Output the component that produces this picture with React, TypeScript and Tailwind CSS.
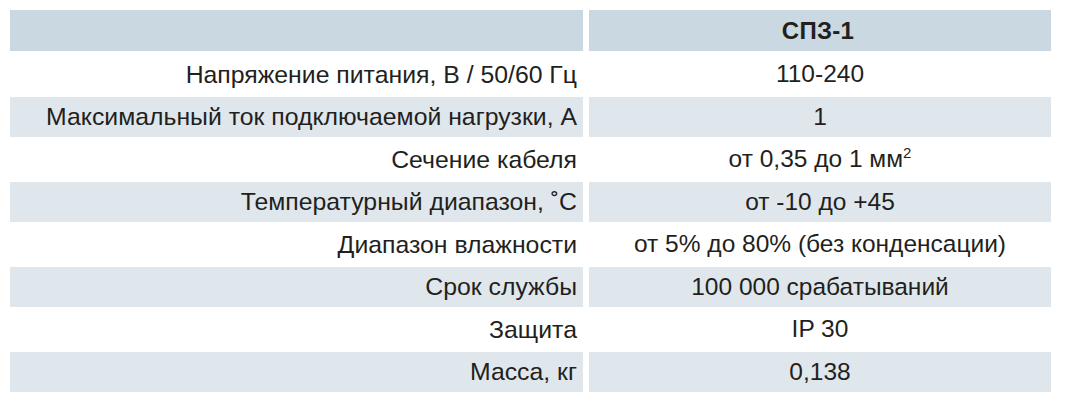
const rows: [string, React.ReactNode][] = [
  ['Напряжение питания, В / 50/60 Гц', '110-240'],
  ['Максимальный ток подключаемой нагрузки, А', '1'],
  [
    'Сечение кабеля',
    <>
      от 0,35 до 1 мм<sup className="text-[15px] relative -top-[9px]">2</sup>
    </>,
  ],
  ['Температурный диапазон, ˚С', 'от -10 до +45'],
  ['Диапазон влажности', 'от 5% до 80% (без конденсации)'],
  ['Срок службы', '100 000 срабатываний'],
  ['Защита', 'IP 30'],
  ['Масса, кг', '0,138'],
];

export default function App() {
  return (
    <div
      className="w-[1068px] h-[413px] bg-white text-[#231f20] pt-[10px] pl-[10px]"
      style={{ fontFamily: '"Liberation Sans", Arial, sans-serif' }}
    >
      <div className="grid grid-cols-[573px_462px] gap-x-[6px] h-[41px] mb-[3.5px]">
        <div className="bg-[#c9d8e1]" />
        <div className="bg-[#c9d8e1] flex items-center justify-center text-[24px] font-bold tracking-[0.3px] pr-[4px]">
          СПЗ-1
        </div>
      </div>
      <div className="flex flex-col gap-y-[2.5px]">
        {rows.map(([label, value], i) => (
          <div
            key={i}
            className="grid grid-cols-[573px_462px] gap-x-[6px] h-[40px]"
          >
            <div
              className={
                (i % 2 === 1 ? 'bg-[#dfe7ed] ' : '') +
                'flex items-center justify-end pr-[6px] whitespace-nowrap text-[24.8px]'
              }
            >
              {label}
            </div>
            <div
              className={
                (i % 2 === 1 ? 'bg-[#dfe7ed] ' : '') +
                'flex items-center justify-center whitespace-nowrap text-[24.5px]'
              }
            >
              <span>{value}</span>
            </div>
          </div>
        ))}
      </div>
    </div>
  );
}
